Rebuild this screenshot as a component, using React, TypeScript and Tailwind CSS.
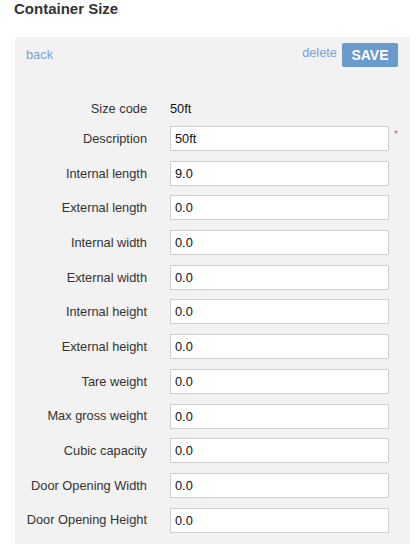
export default function App() {
  const rows: [string, string][] = [
    ["Internal length", "9.0"],
    ["External length", "0.0"],
    ["Internal width", "0.0"],
    ["External width", "0.0"],
    ["Internal height", "0.0"],
    ["External height", "0.0"],
    ["Tare weight", "0.0"],
    ["Max gross weight", "0.0"],
    ["Cubic capacity", "0.0"],
    ["Door Opening Width", "0.0"],
    ["Door Opening Height", "0.0"],
  ];

  return (
    <div
      className="h-[544px] w-[420px] overflow-hidden bg-white"
      style={{ fontFamily: '"Liberation Sans", Arial, sans-serif' }}
    >
      <h1 className="pl-[14px] text-[15px] font-bold leading-[18px] text-[#333]">
        Container Size
      </h1>

      <div className="ml-[15px] mt-[19px] w-[395px] rounded-[3px] bg-[#f2f2f2] pb-[20px] pt-[6px]">
        <div className="flex items-center justify-between pl-[11px] pr-[12px]">
          <a className="text-[12.8px] text-[#7da1d3]">back</a>
          <div className="flex items-center gap-[5px]">
            <a className="pb-[4px] text-[12.8px] text-[#7da1d3]">delete</a>
            <button className="h-[24px] w-[56px] rounded-[2px] bg-[#6b9acd] text-[14px] font-bold text-white">
              SAVE
            </button>
          </div>
        </div>

        <div className="mt-[29px] flex h-[25px] items-center text-[12.8px]">
          <div className="w-[132px] text-right text-[#333]">Size code</div>
          <div className="ml-[23px] font-medium text-[#111]">50ft</div>
        </div>

        <div className="mt-[5px] flex items-center text-[12.8px]">
          <div className="w-[132px] text-right text-[#333]">Description</div>
          <input
            readOnly
            value="50ft"
            className="ml-[23px] h-[25px] w-[219px] border border-[#cfcfcf] bg-white pl-[4px] text-[12.8px] font-medium text-[#111] outline-none"
          />
          <span className="-mt-[8px] ml-[5px] text-[10px] text-[#e8556b]">*</span>
        </div>

        {rows.map(([label, value]) => (
          <div key={label} className="mt-[9.7px] flex items-center text-[12.8px]">
            <div className="w-[132px] text-right text-[#333]">{label}</div>
            <input
              readOnly
              value={value}
              className="ml-[23px] h-[25px] w-[219px] border border-[#cfcfcf] bg-white pl-[4px] text-[12.8px] font-medium text-[#111] outline-none"
            />
          </div>
        ))}
      </div>
    </div>
  );
}
